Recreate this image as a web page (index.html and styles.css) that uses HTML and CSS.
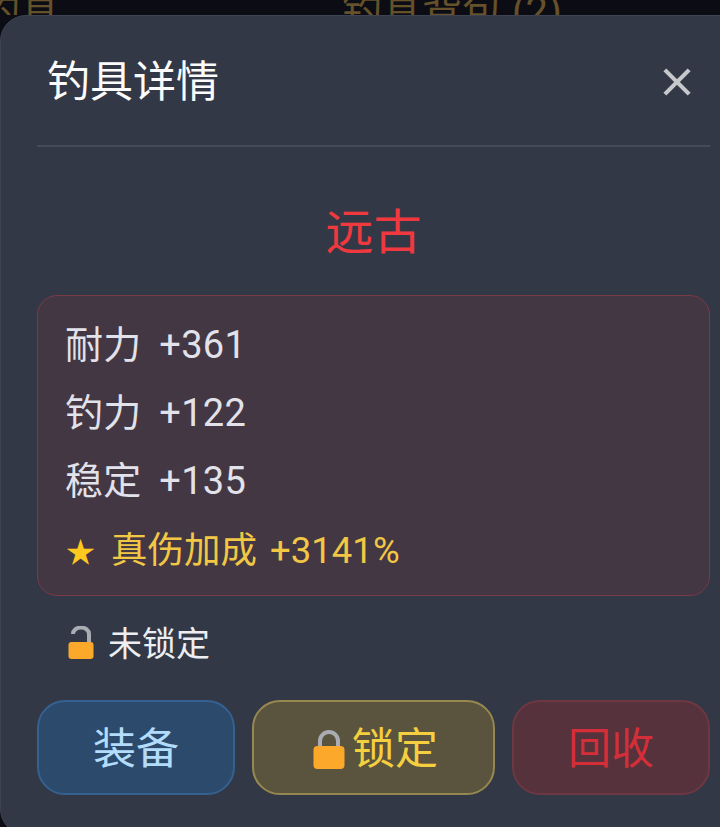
FILE: index.html
```html
<!DOCTYPE html>
<html lang="zh-CN">
<head>
<meta charset="utf-8">
<title>钓具详情</title>
<link rel="stylesheet" href="styles.css">
</head>
<body>
<div class="tabs">
  <div class="tab tab-left">钓具</div>
  <div class="tab tab-right">钓具背包 (2)</div>
</div>
<section class="modal">
  <header class="modal-head">
    <h1 class="modal-title">钓具详情</h1>
    <svg class="close" viewBox="0 0 30 30" aria-label="关闭"><path d="M2 2 L28 28 M28 2 L2 28"/></svg>
  </header>
  <h2 class="item-name">远古</h2>
  <div class="stats">
    <div class="stat">耐力 +361</div>
    <div class="stat">钓力 +122</div>
    <div class="stat">稳定 +135</div>
    <div class="stat-gold"><span class="star">★</span> 真伤加成 +3141%</div>
  </div>
  <div class="lock-state">
    <svg class="lock-open" viewBox="0 0 26 34"><path class="shackle" d="M5 8 a8 6.5 0 0 1 16 0 V17"/><rect class="lock-body" x="0.5" y="16" width="25" height="17" rx="3"/></svg>
    <span>未锁定</span>
  </div>
  <div class="actions">
    <button class="btn btn-equip">装备</button>
    <button class="btn btn-lock"><svg class="lock-closed" viewBox="0 0 32 40"><path class="shackle" d="M7 18 V11 a9 9 0 0 1 18 0 V18"/><rect class="lock-body" x="0.5" y="16" width="31" height="23" rx="4"/></svg>锁定</button>
    <button class="btn btn-recycle">回收</button>
  </div>
</section>
</body>
</html>
```
FILE: styles.css
```css
* { box-sizing: border-box; }
html, body { margin: 0; height: 100%; }
body {
  background: #0c0d14;
  overflow: hidden;
  position: relative;
  font-family: Roboto, "Noto Sans CJK SC", sans-serif;
  color: #e4e4ec;
}
.tabs { display: flex; height: 15px; overflow: hidden; color: #65512a; font-size: 40px; line-height: 24px; }
.tab { white-space: nowrap; }
.tab-left { width: 362px; margin-left: -20px; }
.modal {
  position: absolute;
  left: 0; top: 15px; right: -30px; bottom: -8px;
  background: #323846;
  border-radius: 26px;
  border: 1px solid #3d4352;
  padding: 0 39px 0 36px;
}
.modal-head {
  height: 131px;
  padding: 2px 19px 0 11px;
  border-bottom: 2px solid #464b5c;
  display: flex;
  justify-content: space-between;
  align-items: center;
}
.modal-title { margin: 0 0 0 -1px; font-size: 43px; font-weight: 400; color: #fbfbfb; line-height: 60px; }
.close { width: 28px; height: 28px; fill: none; stroke: #c6c8cc; stroke-width: 4.5; }
.item-name { margin: 53px 0 29px; text-align: center; font-size: 48px; font-weight: 400; line-height: 66px; color: #f0383f; }
.stats {
  height: 301px;
  border: 1px solid #7a3a48;
  border-radius: 20px;
  background: #433744;
  padding: 15px 27px 0;
}
.stat { font-size: 38px; line-height: 68px; color: #e2e2ea; word-spacing: 8px; letter-spacing: 0.3px; }
.stat-gold { font-size: 36.5px; line-height: 68px; color: #f2c744; margin-top: 2px; word-spacing: 4px; }
.star { color: #ffc81e; font-size: 29px; margin-left: 1px; margin-right: 3px; }
.lock-state { display: flex; align-items: center; gap: 14px; margin: 20px 0 0 31px; height: 50px; font-size: 34px; color: #eceef2; }
.lock-open { width: 26px; height: 34px; margin-top: 4px; }
.lock-closed { width: 32px; height: 40px; margin-right: 7px; vertical-align: -6px; }
.shackle { fill: none; stroke: #a9adb3; stroke-width: 4; }
.lock-body { fill: #fca92b; }
.actions { display: flex; gap: 17px; margin-top: 34px; }
.btn { height: 95px; border-radius: 28px; font: inherit; font-size: 43px; padding: 0 0 6px; }
.btn-equip { width: 198px; background: #2c4b6c; border: 2px solid #35608f; color: #b3dcfb; }
.btn-lock { width: 243px; background: #5a533e; border: 2px solid #97884f; color: #f5cf3e; padding-left: 4px; }
.btn-recycle { width: 198px; background: #56323d; border: 2px solid #6e3742; color: #d42e38; }
```
